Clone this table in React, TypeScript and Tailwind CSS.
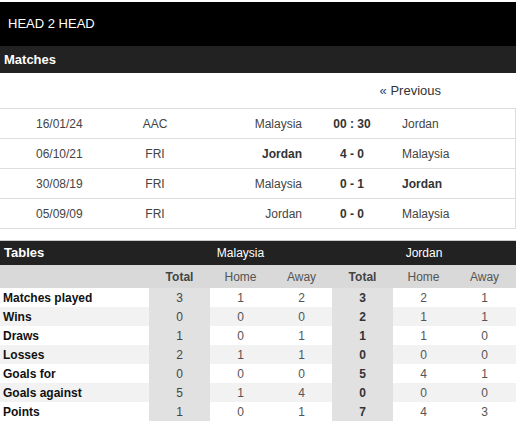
import { FunctionComponent } from 'react';

type Match = { date: string; comp: string; home: string; score: string; away: string; win?: 'home' | 'away' };

const matches: Match[] = [
  { date: '16/01/24', comp: 'AAC', home: 'Malaysia', score: '00 : 30', away: 'Jordan' },
  { date: '06/10/21', comp: 'FRI', home: 'Jordan', score: '4 - 0', away: 'Malaysia', win: 'home' },
  { date: '30/08/19', comp: 'FRI', home: 'Malaysia', score: '0 - 1', away: 'Jordan', win: 'away' },
  { date: '05/09/09', comp: 'FRI', home: 'Jordan', score: '0 - 0', away: 'Malaysia' },
];

const stats: [string, number[]][] = [
  ['Matches played', [3, 1, 2, 3, 2, 1]],
  ['Wins', [0, 0, 0, 2, 1, 1]],
  ['Draws', [1, 0, 1, 1, 1, 0]],
  ['Losses', [2, 1, 1, 0, 0, 0]],
  ['Goals for', [0, 0, 0, 5, 4, 1]],
  ['Goals against', [5, 1, 4, 0, 0, 0]],
  ['Points', [1, 0, 1, 7, 4, 3]],
];

const App: FunctionComponent = () => {
  return (
    <div className="w-[520px] pt-[2px] font-['Liberation_Sans',Arial,sans-serif] bg-white">
      <div className="w-[516px]">
        <div className="h-[44px] bg-black flex items-center pl-[8px] text-[13px] text-white">HEAD 2 HEAD</div>
        <div className="h-[27px] bg-[#222] flex items-center pl-[4px] text-[13px] font-bold text-white">Matches</div>
        <div className="h-[36px] flex items-center justify-end pr-[75px] border-b border-[#ddd] text-[13px]">
          <span className="text-[#1f3f7a]">«</span>
          <span className="text-[#333]">&nbsp;Previous</span>
        </div>
        {matches.map((m) => (
          <div key={m.date} className="h-[30px] flex items-center border-b border-r border-[#ddd] text-[12px] text-[#444]">
            <div className="w-[124px] pl-[36px]">{m.date}</div>
            <div className="w-[62px] text-center">{m.comp}</div>
            <div className={`w-[116px] text-right ${m.win === 'home' ? 'font-bold text-[#333]' : ''}`}>{m.home}</div>
            <div className="w-[100px] text-center font-bold text-[#333]">{m.score}</div>
            <div className={m.win === 'away' ? 'font-bold text-[#333]' : ''}>{m.away}</div>
          </div>
        ))}

        <div className="mt-[11px] border-t border-[#ccc]">
          <div className="h-[24px] bg-[#222] flex items-center text-white text-[12px]">
            <div className="w-[149px] pl-[4px] text-[13px] font-bold">Tables</div>
            <div className="w-[183px] text-center">Malaysia</div>
            <div className="w-[184px] text-center">Jordan</div>
          </div>
          <div className="h-[23px] bg-[#d9d9d9] flex items-center text-[12px] text-[#555]">
            <div className="w-[149px]" />
            {['Total', 'Home', 'Away', 'Total', 'Home', 'Away'].map((h, i) => (
              <div key={i} className={`w-[61px] text-center ${i % 3 === 0 ? 'font-bold text-[#444]' : ''}`}>{h}</div>
            ))}
          </div>
          {stats.map(([label, vals], r) => (
            <div key={label} className={`h-[19px] flex items-center text-[12px] ${r % 2 === 1 ? 'bg-[#f2f2f2]' : 'bg-white'}`}>
              <div className="w-[149px] pl-[3px] font-bold text-[#111]">{label}</div>
              {vals.map((v, i) => (
                <div
                  key={i}
                  className={`w-[61px] h-full flex items-center justify-center ${
                    i === 0 ? 'bg-[#e1e1e1] text-[#444]' : i === 3 ? 'bg-[#e1e1e1] font-bold text-[#333]' : 'text-[#555]'
                  }`}
                >
                  {v}
                </div>
              ))}
            </div>
          ))}
        </div>
      </div>
    </div>
  );
};

export default App;
